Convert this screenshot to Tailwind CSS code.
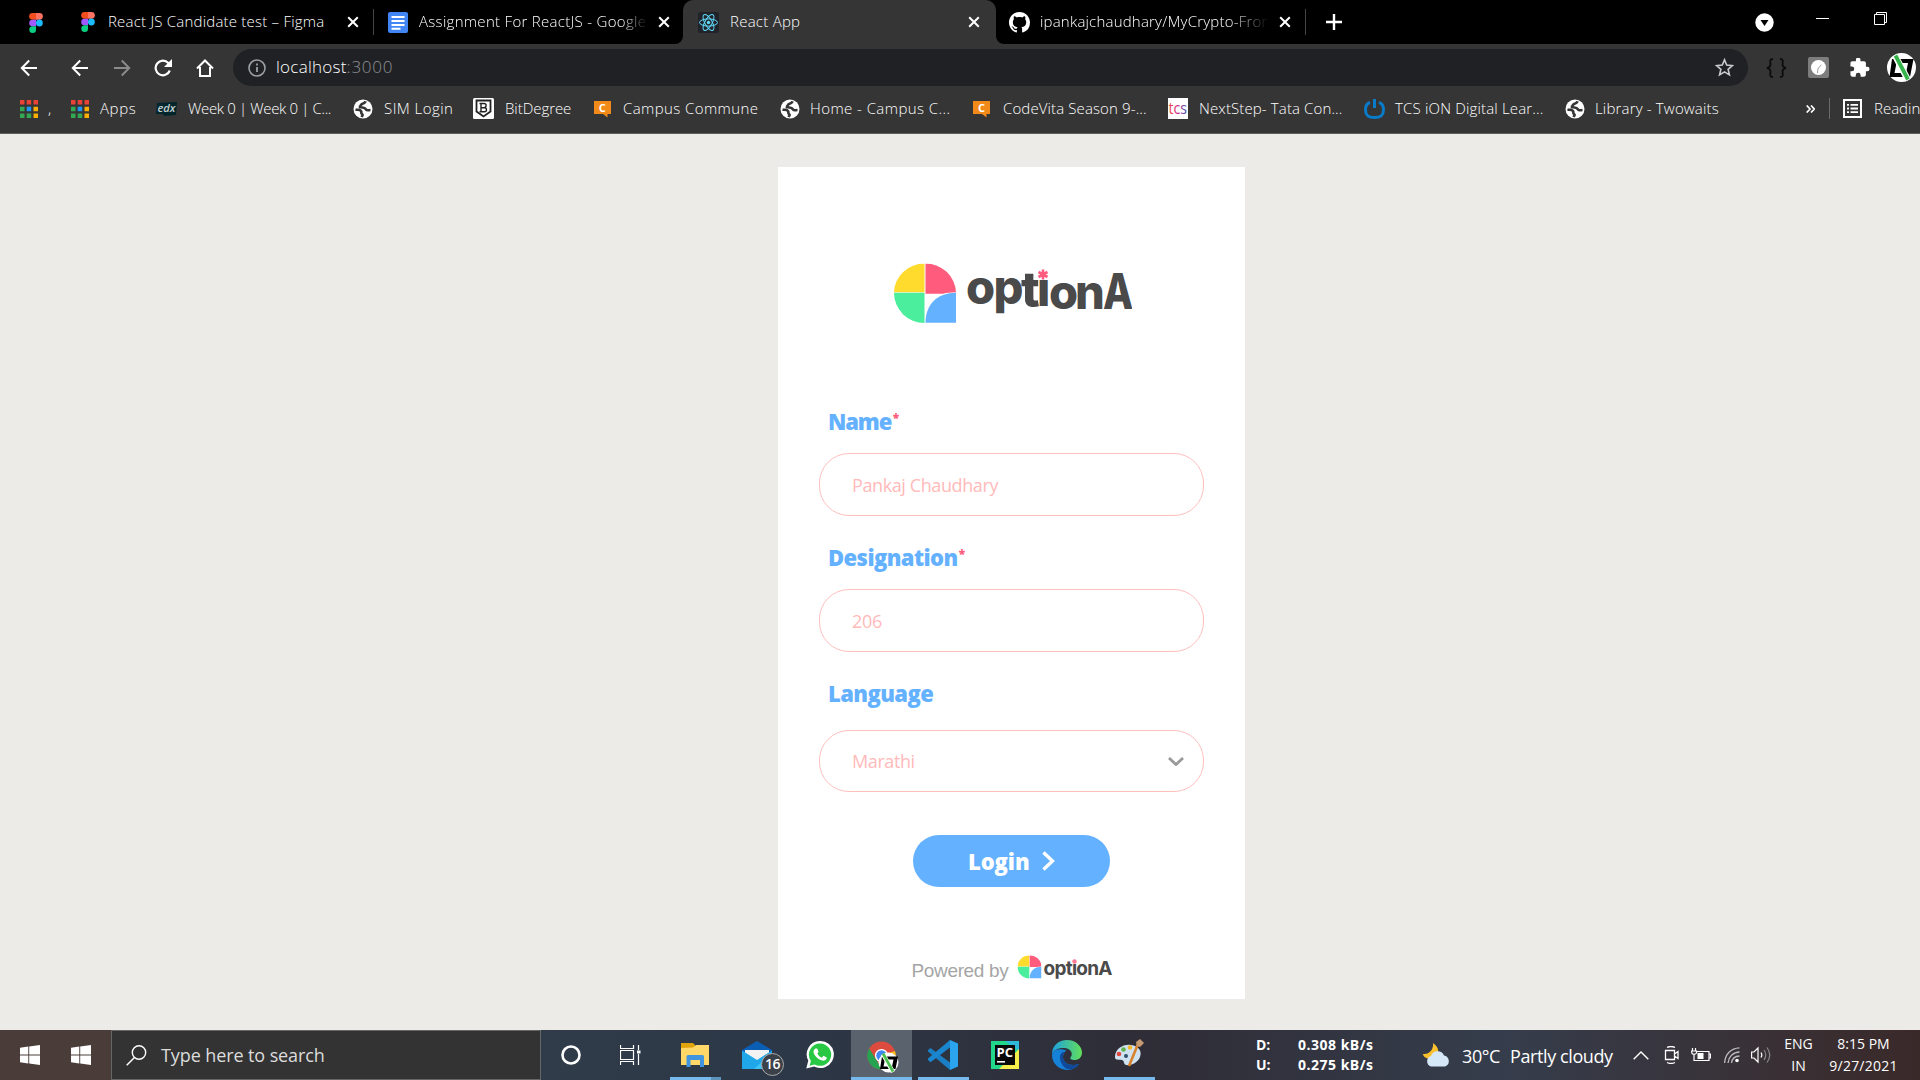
<!DOCTYPE html>
<html lang="en">
<head>
<meta charset="utf-8">
<title>React App</title>
<script src="https://cdn.jsdelivr.net/npm/@tailwindcss/browser@4"></script>
</head>
<body class="w-[1920px] h-[1080px] overflow-hidden bg-[#ecebe7] font-['Open_Sans',sans-serif] flex flex-col">

<svg class="hidden">
  <symbol id="figma" viewBox="0 0 14 20">
    <path fill="#f24e1e" d="M3.5 0H7v6.7H3.5a3.35 3.35 0 010-6.7z"/><path fill="#ff7262" d="M7 0h3.5a3.35 3.35 0 010 6.7H7z"/>
    <path fill="#a259ff" d="M3.5 6.7H7v6.6H3.5a3.3 3.3 0 010-6.6z"/><circle fill="#1abcfe" cx="10.4" cy="10" r="3.4"/>
    <path fill="#0acf83" d="M3.5 13.3H7v3.3a3.35 3.35 0 11-3.5-3.3z"/>
  </symbol>
  <symbol id="close" viewBox="0 0 12 12"><path d="M1.200 1.200l9.600 9.600M10.800 1.200l-9.600 9.600" stroke="#fff" stroke-width="2"/></symbol>
  <symbol id="back" viewBox="0 0 18 18"><path d="M17 9H2M9.200 1.500L1.800 9l7.400 7.500" fill="none" stroke="currentColor" stroke-width="2"/></symbol>
  <symbol id="apps" viewBox="0 0 18 18">
    <path fill="#ea4335" d="M0 0h4.500v4.500H0zM6.700 0h4.500v4.500H6.700zM13.500 0H18v4.500h-4.500z"/>
    <path fill="#34a853" d="M0 6.700h4.500v4.500H0zM0 13.500h4.500V18H0zM6.700 13.500h4.500V18H6.700z"/>
    <path fill="#2196f3" d="M6.700 6.700h4.500v4.500H6.700z"/><path fill="#fbb003" d="M13.500 6.700H18v4.500h-4.500zM13.500 13.500H18V18h-4.500z"/>
  </symbol>
  <symbol id="globe" viewBox="0 0 20 20"><circle cx="10" cy="10" r="9.500" fill="#fff"/><path fill="none" stroke="#353535" stroke-width="2.600" d="M12.500 2.200c-.5 2-1.800 2.300-3.500 2.700-1.500.5-1 2.600-3 3C8 8.500 12 8 13 10.500c1 1.500 3 .5 4.500.5M2.500 10.500c2 .5 4.500 0 5.500 1.500s-.5 2 1 3 0 2-.5 3"/></symbol>
  <symbol id="campus" viewBox="0 0 17 18"><path fill="#f28a1a" d="M0 1h17v13h-3.500v3.500L9 14H0z"/><text x="8.500" y="12" text-anchor="middle" font-family="Open Sans" font-weight="700" font-size="11" fill="#fff">C</text></symbol>
  <symbol id="win" viewBox="0 0 20 20"><path fill="#fff" d="M0 2.800l8.300-1.200v8H0zM9.200 1.500L20 0v9.600H9.200zM0 10.500h8.300v8L0 17.300zM9.200 10.500H20V20L9.200 18.600z"/></symbol>
  <symbol id="leaf" viewBox="0 0 62 60">
    <path fill="#ffdb2d" d="M30.500 0v28.800H0A30.500 29.500 0 0130.500 0z"/><path fill="#ff5b7d" d="M31.500 0A30.500 30 0 0162 28.800q-8 0-13 1.500H31.500z"/>
    <path fill="#4aee9d" d="M0 29.200h30.500V59.500A30.500 30.300 0 010 29.200z"/><path fill="#64b1ff" d="M62 29.200v30H31.500C31.500 41 43 29.200 62 29.200z"/>
  </symbol>
</svg>

<!-- Tab strip -->
<header class="h-11 shrink-0 bg-black flex items-stretch text-white text-[15px] font-light whitespace-nowrap">
  <div class="w-[81px] flex items-center pl-[29px] pt-px"><svg class="w-[14px] h-[20px]"><use href="#figma"/></svg></div>
  <div class="w-[292px] flex items-center">
    <svg class="w-[14px] h-[20px]"><use href="#figma"/></svg>
    <div class="w-[252px] pl-[13px] pb-px tracking-[0.21px]">React JS Candidate test – Figma</div>
    <svg class="w-3 h-3"><use href="#close"/></svg>
  </div>
  <div class="w-[310px] flex items-center">
    <div class="w-px h-[26px] bg-[#444] mr-[14px]"></div>
    <svg class="w-5 h-[21px]" viewBox="0 0 20 21"><rect width="20" height="21" rx="2" fill="#4285f4"/><path stroke="#fff" stroke-width="2" d="M3.500 5h13M3.500 9h13M3.500 13h13M3.500 16.800h9"/></svg>
    <div class="w-[250px] pl-[11px] pr-[10px] pb-px"><div class="overflow-hidden mask-r-from-88% tracking-[0.3px]">Assignment For ReactJS - Google</div></div>
    <svg class="w-3 h-3"><use href="#close"/></svg>
  </div>
  <div class="w-[313px] bg-[#353535] rounded-t-[10px] flex items-center pl-[15px] relative">
    <svg class="absolute -left-2 bottom-0 w-2 h-2" viewBox="0 0 8 8"><path fill="#353535" d="M8 0v8H0a8 8 0 008-8z"/></svg>
    <svg class="absolute -right-2 bottom-0 w-2 h-2" viewBox="0 0 8 8"><path fill="#353535" d="M0 0v8h8a8 8 0 01-8-8z"/></svg>
    <svg class="w-[21px] h-[21px]" viewBox="0 0 21 21"><rect width="21" height="21" rx="2" fill="#20232a"/><g fill="none" stroke="#61dafb" stroke-width="1"><ellipse cx="10.500" cy="10.500" rx="9" ry="3.600"/><ellipse cx="10.500" cy="10.500" rx="9" ry="3.600" transform="rotate(60 10.500 10.500)"/><ellipse cx="10.500" cy="10.500" rx="9" ry="3.600" transform="rotate(120 10.500 10.500)"/></g><circle cx="10.500" cy="10.500" r="1.700" fill="#61dafb"/></svg>
    <div class="w-[249px] pl-[11px] pb-px tracking-[0.25px]">React App</div>
    <svg class="w-3 h-3"><use href="#close"/></svg>
  </div>
  <div class="w-[310px] flex items-center pl-[13px]">
    <svg class="w-[21px] h-[21px] shrink-0" viewBox="0 0 16 16"><path fill="#fff" d="M8 0C3.580 0 0 3.580 0 8c0 3.540 2.290 6.530 5.470 7.590.4.070.55-.17.55-.38 0-.19-.01-.82-.01-1.490-2.010.37-2.530-.49-2.690-.94-.09-.23-.48-.94-.82-1.130-.28-.15-.68-.52-.01-.53.63-.01 1.080.58 1.230.82.72 1.210 1.870.87 2.330.66.070-.52.28-.87.51-1.070-1.780-.2-3.640-.89-3.640-3.950 0-.87.31-1.590.82-2.150-.08-.2-.36-1.020.08-2.120 0 0 .67-.21 2.200.82.64-.18 1.320-.27 2-.27s1.360.09 2 .27c1.530-1.040 2.200-.82 2.200-.82.44 1.100.16 1.920.08 2.120.51.56.82 1.270.82 2.150 0 3.070-1.870 3.750-3.650 3.950.29.25.54.73.54 1.480 0 1.070-.01 1.930-.01 2.200 0 .21.15.46.55.38A8.010 8.010 0 0016 8c0-4.420-3.580-8-8-8z"/></svg>
    <div class="w-[249px] pl-[10px] pr-[10px] pb-px"><div class="overflow-hidden mask-r-from-82% tracking-[0.2px]">ipankajchaudhary/MyCrypto-Fron</div></div>
    <svg class="w-3 h-3"><use href="#close"/></svg>
    <div class="w-px h-[26px] bg-[#444] ml-[14px]"></div>
  </div>
  <div class="flex-1 flex items-center pl-5">
    <svg class="w-4 h-4" viewBox="0 0 16 16"><path d="M8 0v16M0 8h16" stroke="#fff" stroke-width="2.400"/></svg>
    <svg class="w-[19px] h-[19px] ml-[413px]" viewBox="0 0 19 19"><circle cx="9.500" cy="9.500" r="9.200" fill="#fff"/><path d="M5.500 7h8l-4 6z" fill="#000"/></svg>
    <svg class="w-[13px] h-[13px] ml-[42px] mb-[7px]" viewBox="0 0 13 13"><path d="M0 6.500h13" stroke="#fff"/></svg>
    <svg class="w-[13px] h-[13px] ml-[45px] mb-[7px]" viewBox="0 0 13 13"><path d="M.5 2.500h10v10H.5zM2.500 2.500v-2h10v10h-2" fill="none" stroke="#fff"/></svg>
  </div>
</header>

<!-- Address bar -->
<nav class="h-[47px] shrink-0 bg-[#353535] flex items-center text-white">
  <svg class="w-[18px] h-[18px] ml-5"><use href="#back"/></svg>
  <svg class="w-[18px] h-[18px] ml-[33px]"><use href="#back"/></svg>
  <svg class="w-[18px] h-[18px] ml-6 text-[#8b8b8b] rotate-180"><use href="#back"/></svg>
  <svg class="w-[18px] h-[18px] ml-[23px]" viewBox="0 0 18 18"><path d="M15.800 11.500a7.300 7.300 0 11-1.500-7.500l2 2" fill="none" stroke="#fff" stroke-width="2.200"/><path fill="#fff" d="M18 0v8h-8z"/></svg>
  <svg class="w-[18px] h-[18px] ml-[24px]" viewBox="0 0 18 18"><path d="M1 9.500L9 1.500l8 8M4 8v9h10V8" fill="none" stroke="#fff" stroke-width="2"/></svg>
  <div class="ml-[19px] w-[1515px] h-[37px] shrink-0 rounded-full bg-[#202124] flex items-center pl-[15px] text-[17px] font-light">
    <svg class="w-[18px] h-[18px]" viewBox="0 0 18 18"><circle cx="9" cy="9" r="8" fill="none" stroke="#9aa0a6" stroke-width="1.600"/><path d="M9 8v5M9 4.500v2" stroke="#9aa0a6" stroke-width="1.800"/></svg>
    <div class="w-[1449px] pl-[10px] pb-px tracking-[0.25px]">localhost<span class="text-[#8f9296] tracking-[0.75px]">:3000</span></div>
    <svg class="w-[19px] h-[19px] shrink-0" viewBox="0 0 19 19"><path d="M9.500 1.800l2.200 5.300 5.700.5-4.300 3.700 1.300 5.600-4.900-3-4.900 3 1.300-5.600L1.600 7.600l5.700-.5z" fill="none" stroke="#c8cacd" stroke-width="1.600"/></svg>
  </div>
  <svg class="w-[21px] h-[20px] ml-[18px] shrink-0" viewBox="0 0 21 20"><path d="M7 1C3 1 4.500 4 4.500 6.500S3 9.500 1 10c2 .5 3.500 1 3.500 3.500S3 19 7 19M14 1c4 0 2.500 3 2.500 5.500S18 9.500 20 10c-2 .5-3.500 1-3.500 3.500S18 19 14 19" fill="none" stroke="#0c0c0c" stroke-width="1.800"/></svg>
  <svg class="w-[21px] h-[21px] ml-[21px] shrink-0" viewBox="0 0 21 21"><rect width="21" height="21" rx="2" fill="#7d7d7d"/><circle cx="10.500" cy="10.500" r="7.500" fill="#fff"/><path d="M9.500 16c0-4 1-6 4-8" stroke="#999" fill="none"/></svg>
  <svg class="w-[20px] h-[20px] ml-[21px] shrink-0" viewBox="1.500 1.500 22 22"><path fill="#fff" d="M20.500 11H19V7a2 2 0 00-2-2h-4V3.500a2.500 2.500 0 00-5 0V5H4a2 2 0 00-2 2v3.800h1.500a2.700 2.700 0 010 5.400H2V20a2 2 0 002 2h3.800v-1.500a2.700 2.700 0 015.400 0V22H17a2 2 0 002-2v-4h1.500a2.500 2.500 0 000-5z"/></svg>
  <svg class="w-[29px] h-[29px] ml-[17px] shrink-0" viewBox="0 0 29 29"><circle cx="14.500" cy="14.500" r="14.500" fill="#fff"/><path fill="#000" fill-rule="evenodd" d="M5 6h21.500L23 24H2.500zM9.500 10L7.500 20H19l2-10z"/><path d="M8 2.500l13 24.500" stroke="#fff" stroke-width="6.500"/><path d="M8.500 2.500l12.500 24" stroke="#35b44a" stroke-width="3.800"/></svg>
</nav>

<!-- Bookmarks -->
<nav class="h-[43px] shrink-0 bg-[#353535] border-b border-[#5e5e5c] flex items-center pb-[7px] pl-5 text-white text-[15px] font-light whitespace-nowrap overflow-hidden">
  <div class="w-[51px] shrink-0 flex items-center gap-[10px]"><svg class="w-[18px] h-[18px]"><use href="#apps"/></svg><span>,</span></div>
  <div class="w-[85px] shrink-0 flex items-center gap-[11px] tracking-[0.6px]"><svg class="w-[18px] h-[18px]"><use href="#apps"/></svg>Apps</div>
  <div class="w-[197px] shrink-0 flex items-center gap-[11px] tracking-[-0.36px]"><svg class="w-[21px] h-[14px]" viewBox="0 0 21 14"><path fill="#02262b" d="M1 1l20-1-1 13-12 1-1-2H0z"/><text x="1.500" y="10" font-family="Open Sans" font-style="italic" font-weight="600" font-size="10.500" letter-spacing="0" textLength="18" lengthAdjust="spacingAndGlyphs" fill="#c5cfcf">edx</text></svg>Week 0 | Week 0 | C...</div>
  <div class="w-[120px] shrink-0 flex items-center gap-[11px] tracking-[0.45px]"><svg class="w-5 h-5"><use href="#globe"/></svg>SIM Login</div>
  <div class="w-[121px] shrink-0 flex items-center gap-[11px] tracking-[-0.05px]"><svg class="w-[21px] h-[21px]" viewBox="0 0 21 21"><rect width="21" height="21" rx="1.500" fill="#fff"/><path d="M3.500 2.500h14v11l-7 5-7-5z" fill="none" stroke="#222" stroke-width="1.800"/><path d="M8 5.500h3a2 2 0 010 4.200H8zm0 4.200h3.500a2 2 0 010 4H8zM6.500 5.500H9M6.500 13.700H9" fill="none" stroke="#222" stroke-width="1.400"/></svg>BitDegree</div>
  <div class="w-[186px] shrink-0 flex items-center gap-[12px] tracking-[0.4px]"><svg class="w-[17px] h-[18px]"><use href="#campus"/></svg>Campus Commune</div>
  <div class="w-[193px] shrink-0 flex items-center gap-[10px] tracking-[0.42px]"><svg class="w-5 h-5"><use href="#globe"/></svg>Home - Campus C...</div>
  <div class="w-[195px] shrink-0 flex items-center gap-[13px] tracking-[0.12px]"><svg class="w-[17px] h-[18px]"><use href="#campus"/></svg>CodeVita Season 9-...</div>
  <div class="w-[196px] shrink-0 flex items-center gap-[11px] tracking-[0.12px]"><svg class="w-5 h-[21px]" viewBox="0 0 20 21"><defs><linearGradient id="tcs"><stop stop-color="#f0503c"/><stop offset=".5" stop-color="#d3268c"/><stop offset="1" stop-color="#3f5bb5"/></linearGradient></defs><rect width="20" height="21" fill="#fff"/><text x=".5" y="16" font-family="Open Sans" font-weight="500" font-size="16" letter-spacing="0" textLength="18.500" lengthAdjust="spacingAndGlyphs" fill="url(#tcs)">tcs</text></svg>NextStep- Tata Con...</div>
  <div class="w-[201px] shrink-0 flex items-center gap-[10px] tracking-[0.17px]"><svg class="w-[21px] h-[20px]" viewBox="0 0 21 20"><path d="M6 3.500C2.500 4.500 1.500 7 1.500 10.500c0 5.500 2 8 9 8s9-2.500 9-8c0-3.500-1-6-4.500-7M10.500 0v9" fill="none" stroke="#0a7bc9" stroke-width="3"/></svg>TCS iON Digital Lear...</div>
  <div class="w-[241px] shrink-0 flex items-center gap-[10px] tracking-[0.17px]"><svg class="w-5 h-5"><use href="#globe"/></svg>Library - Twowaits</div>
  <svg class="w-[9px] h-2 shrink-0" viewBox="0 0 9 8"><path d="M.7.500L4 4 .7 7.500M5 .500L8.300 4 5 7.500" fill="none" stroke="#fff" stroke-width="1.700"/></svg>
  <div class="w-px h-[21px] shrink-0 bg-[#6b6b6b] ml-[14px]"></div>
  <svg class="w-[19px] h-[19px] shrink-0 ml-[13px] mr-[12px]" viewBox="0 0 19 19"><path d="M1 1h17v17H1z" fill="none" stroke="#fff" stroke-width="2"/><path d="M4 5.800h2M4 9.500h2M4 13.200h2M7.500 5.800H15M7.500 9.500H15M7.500 13.200H15" stroke="#fff" stroke-width="1.800"/></svg>
  <span>Readin</span>
</nav>

<!-- Page -->
<main class="h-[896px] shrink-0 flex justify-center pt-[33px] pl-[103px]">
  <section class="w-[467px] h-[832px] bg-white flex flex-col items-center">
    <svg class="mt-[90px] h-[76px] w-[240px] shrink-0 ml-[1px]" viewBox="892 257 240 76">
      <use href="#leaf" x="894" y="263.500" width="62" height="60"/>
      <g font-family="Inter" font-weight="800" fill="#4a4a4a" font-size="47"><text y="304" x="966 993.500">op</text><text y="307" x="1021" font-size="49">t</text><text x="1037" y="306">ı</text><text x="1049 1075" y="309">on</text><text transform="translate(1103 309) scale(.8 1)" font-size="49">A</text></g>
      <path d="M1043 269.500v10M1038.500 272l9 5M1047.500 272l-9 5" stroke="#ff5b7d" stroke-width="2.600"/>
    </svg>
    <form class="w-[385px] flex flex-col mt-[72px] text-[18px] text-[#ffbaba]">
      <label class="h-[32px] ml-[9px] flex items-center text-[22px] font-extrabold text-[#64b1ff] tracking-[-1.1px]">Name<span class="text-[12px] text-[#ff5b7d] mb-[7px] ml-[1.5px]">*</span></label>
      <div class="mt-[16px] h-[63px] rounded-[30px] border border-[#ffbfbf] flex items-center pl-[32px] pt-px tracking-[-0.4px]">Pankaj Chaudhary</div>
      <label class="mt-[25px] h-[32px] ml-[9px] flex items-center text-[22px] font-extrabold text-[#64b1ff] tracking-[-0.58px]">Designation<span class="text-[12px] text-[#ff5b7d] mb-[7px] ml-px">*</span></label>
      <div class="mt-[16px] h-[63px] rounded-[30px] border border-[#ffbfbf] flex items-center pl-[32px] pt-px tracking-[-0.3px]">206</div>
      <label class="mt-[25px] h-[32px] ml-[9px] flex items-center text-[22px] font-extrabold text-[#64b1ff] tracking-[-0.6px]">Language</label>
      <div class="mt-[21px] h-[62px] rounded-[30px] border border-[#ffbfbf] flex items-center justify-between pl-[32px] pr-[19px] tracking-[-0.4px]">Marathi<svg class="w-4 h-[9px]" viewBox="0 0 16 9"><path d="M1 1l7 6.500L15 1" fill="none" stroke="#999" stroke-width="2.800"/></svg></div>
    </form>
    <button class="mt-[43px] w-[197px] h-[52px] shrink-0 rounded-full bg-[#64b1ff] text-white text-[22px] font-extrabold flex items-center pl-[55px]"><span class="w-[74px] text-left tracking-[-0.1px]">Login</span><svg class="w-[13px] h-[20px]" viewBox="0 0 13 20"><path d="M1.500 1.500L10.500 10l-9 8.500" fill="none" stroke="#fff" stroke-width="3.400"/></svg></button>
    <div class="mt-[68px] w-[200px] flex items-start">
      <span class="mt-[5px] h-[22px] leading-[22px] text-[19px] text-[#a5a5a5] font-['Liberation_Sans',Arial,sans-serif] w-[105px] shrink-0 whitespace-nowrap tracking-[-0.35px]">Powered by</span>
      <svg class="w-[97px] h-[30px] shrink-0" viewBox="1017 955 97 30"><use href="#leaf" x="1017.500" y="955" width="24" height="24"/><text x="1043.500" y="975" font-family="Inter" font-weight="700" font-size="19" textLength="69" fill="#4a4a4a">optıonA</text><circle cx="1074.500" cy="961.500" r="2.200" fill="#ff7a94"/></svg>
    </div>
  </section>
</main>

<!-- Taskbar -->
<footer class="h-[50px] shrink-0 flex items-center text-white bg-[#343236] whitespace-nowrap">
  <div class="w-[111px] h-full shrink-0 flex items-center bg-[#493c39] pl-5 gap-[31px]"><svg class="w-5 h-5"><use href="#win"/></svg><svg class="w-5 h-5"><use href="#win"/></svg></div>
  <div class="w-[430px] h-full shrink-0 flex items-center bg-[#333] border border-[#666] pl-[14px] text-[18px] text-[#dcdcdc] tracking-[-0.1px]"><svg class="w-[21px] h-[21px] mr-[14px]" viewBox="0 0 21 21"><circle cx="13" cy="7.500" r="6.700" fill="none" stroke="#fff" stroke-width="1.400"/><path d="M8.500 12.500L.7 20.300" stroke="#fff" stroke-width="1.500"/></svg>Type here to search</div>
  <div class="w-[614px] h-full shrink-0 flex items-center bg-linear-to-r from-[#303c49] via-[#2c3747] via-40% to-[#2f2d36]">
    <svg class="w-5 h-5 ml-5" viewBox="0 0 20 20"><circle cx="10" cy="10" r="8.500" fill="none" stroke="#fff" stroke-width="2.600"/></svg>
    <svg class="w-[21px] h-5 ml-[39px]" viewBox="0 0 21 20"><path d="M.5 0v3.500h13V0M.5 5.500h13v9H.5zM.5 20v-3.500h13V20M18.500 0v5M18.500 9v11" fill="none" stroke="#fff" stroke-width="1.200"/><path fill="#fff" d="M17 5.500h3.500v3H17z"/></svg>
    <div class="ml-[29px] w-[51px] h-full flex flex-col items-center justify-end">
      <svg class="w-[29px] h-6 mb-[10px] -ml-px" viewBox="0 0 29 24"><path fill="#e0a30c" d="M0 0h12l2 2v4H0z"/><path fill="#ffd868" d="M0 5l12-.5 3-2.500h13v20H0z"/><path fill="#4095de" d="M5.500 24V13.500q0-1.500 1.500-1.500h14.500q1.500 0 1.500 1.500V24h-4v-7H9.500v7z"/></svg>
      <div class="w-full h-[3px] flex"><div class="w-[41px] bg-[#76b9ed]"></div><div class="flex-1 bg-[#5d93bd]"></div></div>
    </div>
    <div class="ml-[21px] w-[42px] h-[28px] relative">
      <svg class="w-[30px] h-[28px]" viewBox="0 0 30 28"><path fill="#0a5fb4" d="M0 9L15 0l15 9v8H0z"/><path fill="#f3f3f3" d="M3 9h24v7l-12 6-12-6z"/><path fill="#1fa7ea" d="M0 9.500L15 19 30 9.500V28H0z"/><path fill="#3fc4f5" d="M12 28L30 12v16z"/></svg>
      <div class="absolute left-[19px] top-[12px] w-[23px] h-[23px] rounded-full bg-[#3a4149] border border-[#aaa] text-[14px] leading-[20px] font-semibold tracking-[-0.5px] flex justify-center">16</div>
    </div>
    <svg class="w-[28px] h-[28px] ml-[22px]" viewBox="0 0 28 28"><path fill="#fff" d="M14.300 0A13.500 13.500 0 112.700 20.300 13.300 13.300 0 0114.300 0zM.300 27.500l2-8 6 6z"/><path fill="#28c845" d="M14.300 2.400A11.200 11.200 0 118.600 23.400l-5 1.300 1.300-4.800A11.200 11.200 0 0114.300 2.400z"/><path fill="#fff" d="M9.600 7.500h1.500l1.500 3.300-1.200 1.800c1.100 2.300 2.700 3.400 4.500 4.100l1.600-1.900 3.300 1.600c-.3 2.800-2.600 3.500-4.300 3.200-5-1-8.500-5.500-9-8.500 0-1.500.8-3 2.100-3.600z"/></svg>
    <div class="ml-[17px] w-[61px] h-full bg-[#5a626d] flex flex-col items-center justify-end">
      <svg class="w-8 h-8 mb-[4px] ml-[3px]" viewBox="0 0 32 32"><circle cx="14.500" cy="14.500" r="14" fill="#dd4b3e"/><path fill="#fbc116" d="M14.500 14.500L28 10a14 14 0 01-13.500 18.500z"/><path fill="#26a350" d="M2.200 7.500L10 20l5 8.500A14 14 0 012.200 7.500z"/><circle cx="14.500" cy="14.500" r="6.600" fill="#fff"/><circle cx="14.500" cy="14.500" r="5.200" fill="#4285f4"/><circle cx="21.500" cy="21.500" r="10" fill="#fff"/><path fill="#000" fill-rule="evenodd" d="M15 15.500h16L28.500 28H13zM18 18.500l-1.500 7h8.500l1.500-7z"/><path d="M16 13l10 18" stroke="#fff" stroke-width="4.500"/><path d="M16 12.500l10 18" stroke="#4ac04e" stroke-width="2.800"/></svg>
      <div class="w-full h-[3px] bg-[#76b9ed]"></div>
    </div>
    <div class="ml-[6px] w-[51px] h-full flex flex-col items-center justify-end">
      <svg class="w-[30px] h-[30px] mb-[7px] -ml-px" viewBox="0 0 30 30"><path fill="#1a7fc4" d="M0 10l2.500-2L22 22.500V30L0 11.500z"/><path fill="#1a86d0" d="M0 20l2.500 2.200L22 7.500V0L0 18.500z"/><path fill="#2ba4f0" d="M22 0l8 3.500v23L22 30z"/></svg>
      <div class="w-full h-[3px] bg-[#76b9ed]"></div>
    </div>
    <svg class="w-7 h-7 ml-[22px]" viewBox="0 0 28 28"><path fill="#21d789" d="M0 0h28v28H0z"/><path fill="#2fb8d8" d="M14 0h14v10z"/><path fill="#f5ee4b" d="M28 8v20H8z"/><path fill="#0a0a0a" d="M4 4h20v20H4z"/><text x="5.500" y="15.500" font-family="Open Sans" font-weight="700" font-size="12.500" textLength="16.500" lengthAdjust="spacingAndGlyphs" fill="#fff">PC</text><path fill="#fff" d="M6 20h8v1.600H6z"/></svg>
    <svg class="w-[30px] h-[30px] ml-[33px]" viewBox="0 0 30 30"><defs><linearGradient id="eg"><stop stop-color="#1c9fe0"/><stop offset="1" stop-color="#62e05a"/></linearGradient></defs><path fill="#1681d8" d="M0 15a15 15 0 0015 15c4.500 0 9-2 12-6-9 3-16-1-16-7 0-3 1-5 3.500-6.500C6 7 0 11 0 15z"/><path fill="#10499a" d="M8 17c0 7 5 13 11 12.400 3-.6 6-2.400 8-5.400-9 3-16-1-16-7 0-2 .5-3.500 1.500-5C9.500 12 8 14 8 17z"/><path fill="url(#eg)" d="M0 14C0 6 6.500 0 15 0c9 0 15 6.500 15 12.500C30 17.500 26.500 20 22.500 20c-3 0-5-1-4-2.500C22 13 18 8.500 12.500 8 6.500 7.500 1.500 10 0 14z"/></svg>
    <div class="ml-[22px] w-[51px] h-full flex flex-col items-center justify-end">
      <svg class="w-[30px] h-[28px] mb-[10px] -ml-px" viewBox="0 0 30 28"><path fill="#cfe2f1" d="M1 18C1 10 9 5 17 6c8 1 11 6 9 12-2 5-8 9-14 8-3-1-1-4-4-5s-7 1-7-3z"/><circle cx="5" cy="15" r="2.300" fill="#e0483e"/><circle cx="9.500" cy="10.500" r="2.300" fill="#63b34c"/><circle cx="16" cy="8.500" r="2.300" fill="#f3b72e"/><circle cx="12" cy="17" r="2" fill="#31506b"/><path d="M24 5l-9 22" stroke="#d9822c" stroke-width="2.600"/><path fill="#c79b72" d="M22 3l4-3 4 4-4 4-3-1z"/></svg>
      <div class="w-full h-[3px] bg-[#76b9ed]"></div>
    </div>
  </div>
  <div class="flex-1 h-full flex items-center bg-linear-to-r from-[#2f2d36] via-[#353d4c] via-45% to-[#3a2929]">
    <div class="ml-[101px] w-[42px] shrink-0 text-[14px] leading-[20px] font-bold"><div>D:</div><div>U:</div></div>
    <div class="w-[125px] shrink-0 text-[14px] leading-[20px] font-bold tracking-[0.5px]"><div>0.308 kB/s</div><div>0.275 kB/s</div></div>
    <svg class="w-7 h-6 shrink-0" viewBox="0 0 28 24"><path fill="#fbc02d" d="M10 0c4 3 6 6 5 11l-9 5C2 15 0 13 0 11c6 1 11-5 10-11z"/><path fill="#d5e8f8" d="M8 23.500a5.500 5.500 0 010-10.500 7 7 0 0113-.5A5.700 5.700 0 0122 23.500z"/></svg>
    <div class="w-[182px] shrink-0 pl-[11px] pt-[3px] text-[18px] flex tracking-[-0.4px]"><span class="w-[48px]">30°C</span><span>Partly cloudy</span></div>
    <svg class="w-4 h-[9px] shrink-0" viewBox="0 0 16 9"><path d="M.7 8.300L8 1l7.300 7.300" fill="none" stroke="#fff" stroke-width="1.400"/></svg>
    <svg class="w-4 h-[18px] shrink-0 ml-[15px]" viewBox="0 0 16 18"><path d="M1.500 4.500h9v9h-9zM10.500 8l3.500-2.500v7L10.500 10M3 1.500q4-2 8 0M3 16.500q4 2 8 0" fill="none" stroke="#fff" stroke-width="1.300"/></svg>
    <svg class="w-5 h-[14px] shrink-0 ml-[11px]" viewBox="0 0 20 14"><path d="M5 3.500h13v9H3V8M18 6h1.500v4H18M1.500 0v2.500M4.500 0v2.500M.500 3h5v2q-2 2.500-4.500.5zM3 6v3" fill="none" stroke="#fff" stroke-width="1.200"/><path fill="#fff" d="M6.500 5h6v6h-6z"/></svg>
    <svg class="w-4 h-4 shrink-0 ml-[13px]" viewBox="0 0 16 16"><path d="M.6 16C1 7 7 1.200 15.500.800M4 16c.5-6 5-10.800 11.500-11M7.500 16c.5-4 3.500-6.800 8-7" fill="none" stroke="#bbb" stroke-width="1.300"/><circle cx="13" cy="13.500" r="1.800" fill="#fff"/></svg>
    <svg class="w-5 h-[18px] shrink-0 ml-[11px]" viewBox="0 0 20 18"><path d="M.6 6h2.400l4-4v14l-4-4H.6z" fill="none" stroke="#fff" stroke-width="1.200"/><path d="M10 6.500q1.700 2.500 0 5" fill="none" stroke="#fff" stroke-width="1.200"/><path d="M13 4q3.500 5 0 10M16 1.500q5.500 7.500 0 15" fill="none" stroke="#888" stroke-width="1.200"/></svg>
    <div class="ml-[13px] w-[29px] shrink-0 flex flex-col items-center text-[14px] leading-[22px]"><span>ENG</span><span>IN</span></div>
    <div class="ml-[16px] w-[69px] shrink-0 flex flex-col items-center text-[14px] leading-[22px]"><span>8:15 PM</span><span class="tracking-[0.22px]">9/27/2021</span></div>
  </div>
</footer>
</body>
</html>
